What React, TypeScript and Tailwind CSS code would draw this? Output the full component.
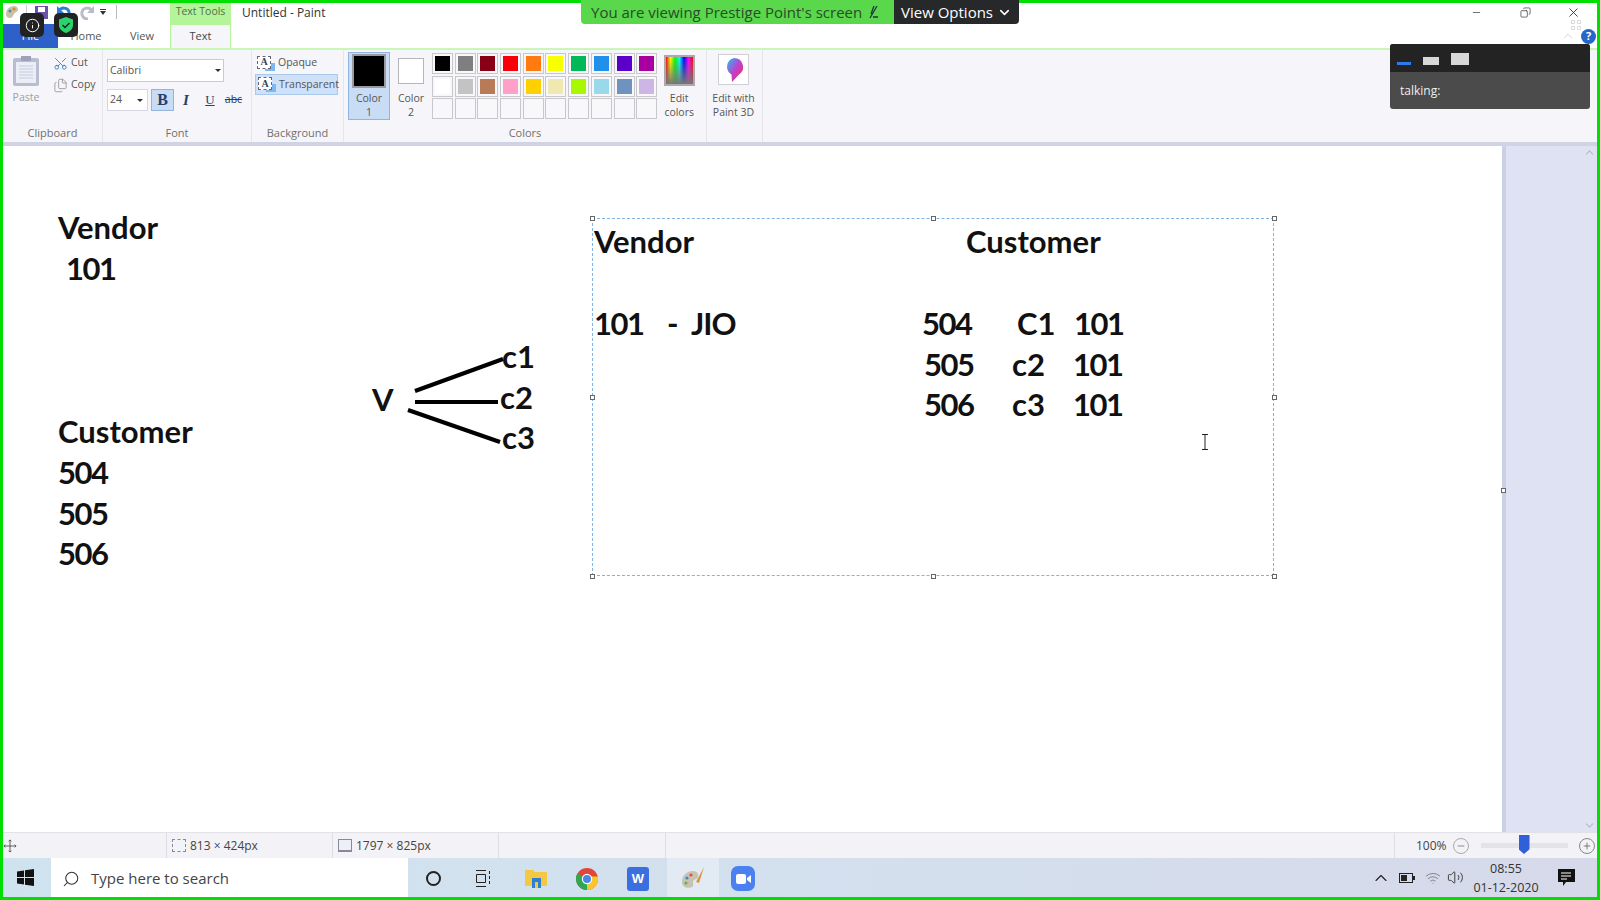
import { Scissors, Files, Search, ChevronDown, ChevronUp, Minus, Plus, X, Copy, Info, Wifi, Volume2 } from "lucide-react";
import type { ReactNode } from "react";

const row1 = ["#000000", "#7f7f7f", "#880015", "#f80008", "#ff7a10", "#f8ff00", "#00b858", "#2090e8", "#5a00c8", "#a800a0"];
const row2 = ["#ffffff", "#c3c3c3", "#b97a57", "#ffa0c8", "#ffd000", "#efe8b0", "#a8f800", "#99d9ea", "#7092be", "#cdb6e6"];

function Swatch({ color }: { color?: string }) {
  return (
    <div className="h-[21px] w-[21px] border border-[#c8c8cc] bg-[#f8f7fa] p-[2px]">
      {color && <div className="h-full w-full" style={{ background: color }} />}
    </div>
  );
}

function Group({ label, className, children }: { label: string; className: string; children: ReactNode }) {
  return (
    <div className={`flex shrink-0 flex-col border-r border-[#e6e5ea] ${className}`}>
      <div className="flex flex-1">{children}</div>
      <div className="pb-[2px] text-center text-[11px] leading-[14px] text-[#707070]">{label}</div>
    </div>
  );
}

function Ink({ className, children }: { className: string; children: ReactNode }) {
  return (
    <span className={`absolute -translate-y-px whitespace-pre font-['Lato',sans-serif] text-[31px] font-bold leading-[40px] text-[#111] ${className}`}>
      {children}
    </span>
  );
}

function Handle({ className }: { className: string }) {
  return <div className={`absolute h-[5px] w-[5px] border border-[#666] bg-white ${className}`} />;
}

function TextIcon() {
  return (
    <div className="relative h-[15px] w-[18px] shrink-0">
      <div className="absolute bottom-0 right-0 h-[8px] w-[10px] bg-[#7db8f0]" />
      <div className="absolute left-0 top-0 flex h-[13px] w-[14px] items-center justify-center border border-dashed border-[#667] bg-white font-['Liberation_Serif',serif] text-[10px] font-bold leading-none text-[#345]">
        A
      </div>
    </div>
  );
}

export default function App() {
  return (
    <div className="flex h-screen w-screen flex-col overflow-hidden bg-[#00e000] p-[3px] font-['Open_Sans',sans-serif] text-[#555]">
      <div className="relative flex min-h-0 flex-1 flex-col bg-white">
        {/* title bar */}
        <div className="flex h-[21px] shrink-0 items-center">
          <div className="flex w-[167px] items-center gap-[7px] pb-[3px] pl-[2px]">
            <svg width="14" height="16" viewBox="0 0 14 16"><path d="M1 10c0-5 4-8 8-8 3 0 4 2 4 4s-3 2-4 4-2 4-4 4-4-1-4-4z" fill="#c9c2a0" /><circle cx="5" cy="7" r="1.5" fill="#3a8ad0" /><circle cx="9" cy="5" r="1.5" fill="#e08030" /></svg>
            <div className="h-[14px] w-px bg-[#ccc]" />
            <svg width="15" height="15" viewBox="0 0 15 15"><rect x="1" y="1" width="13" height="13" fill="#6a52a8" /><rect x="4" y="2" width="7" height="5" fill="#fff" /></svg>
            <svg width="16" height="15" viewBox="0 0 16 15" fill="none"><path d="M3 6c2-4 9-4 10 1s-3 7-6 7" stroke="#2f7fd0" strokeWidth="3" /><path d="M1 1v7h7z" fill="#2f7fd0" /></svg>
            <svg width="16" height="15" viewBox="0 0 16 15" fill="none"><path d="M13 6c-2-4-9-4-10 1s3 7 6 7" stroke="#b8bcc8" strokeWidth="3" /><path d="M15 1v7H8z" fill="#b8bcc8" /></svg>
            <div className="flex w-[10px] -translate-x-[6px] flex-col items-center gap-[1px] pl-[3px]">
              <div className="h-px w-[6px] bg-[#333]" />
              <div className="h-0 w-0 border-x-[3px] border-t-[4px] border-x-transparent border-t-[#333]" />
            </div>
            <div className="h-[14px] w-px -translate-x-[3px] bg-[#bbb]" />
          </div>
          <div className="flex h-full w-[61px] items-center justify-center bg-[#b4f59a] pb-[3px] text-[10.5px] text-[#4f6f4a]">Text Tools</div>
          <div className="pb-[2px] pl-[11px] text-[12px] text-[#333]">Untitled - Paint</div>
          <div className="ml-auto flex w-[144px] items-center pb-[3px]">
            <Minus size={11} className="ml-[18px] text-[#222]" strokeWidth={1.4} />
            <Copy size={11} className="ml-[38px] -scale-x-100 text-[#222]" strokeWidth={1.4} />
            <X size={15} className="ml-[35px] text-[#222]" strokeWidth={1.3} />
          </div>
        </div>
        <div className="flex h-[24px] shrink-0 items-stretch">
          <div className="flex w-[55px] items-center justify-center bg-[#2f5fc8] text-[11px] text-white">File</div>
          <div className="flex w-[56px] items-center justify-center text-[11px] text-[#555]">Home</div>
          <div className="flex w-[56px] items-center justify-center text-[11px] text-[#555]">View</div>
          <div className="-mb-[2px] flex w-[61px] items-center justify-center border-x border-t border-[#b4f59a] bg-[#f6f5f9] pb-[2px] text-[11px] text-[#444]">Text</div>
          <div className="ml-auto flex items-center gap-[6px] pr-[1px]">
            <ChevronUp size={14} className="text-[#c0c0c0]" strokeWidth={1.2} />
            <div className="flex h-[15px] w-[15px] items-center justify-center rounded-full bg-[#2566c8] text-[11px] font-bold text-white">?</div>
          </div>
        </div>

        {/* ribbon */}
        <div className="flex h-[94px] shrink-0 border-t-2 border-[#c8f7b8] bg-[#f6f5f9]">
          <Group label="Clipboard" className="w-[100px]">
            <div className="flex w-[46px] flex-col items-center pt-[5px]">
              <svg width="28" height="32" viewBox="0 0 28 32">
                <rect x="1" y="3" width="26" height="28" rx="2" fill="#b9bdd2" />
                <rect x="4" y="7" width="20" height="21" fill="#eceef6" />
                <path d="M7 11h14M7 14h14M7 17h14M7 20h14M7 23h14" stroke="#c5cae0" />
                <rect x="9" y="1" width="10" height="5" fill="#9da2b8" />
              </svg>
              <span className="mt-[3px] text-[10.5px] leading-[14px] text-[#a0a0a0]">Paste</span>
            </div>
            <div className="flex flex-col gap-[6px] pl-[4px] pt-[5px]">
              <div className="flex h-[16px] items-center gap-[3px] text-[10.5px]">
                <Scissors size={15} className="-rotate-90 text-[#2f80c8]" strokeWidth={1.4} />
                Cut
              </div>
              <div className="flex h-[16px] items-center gap-[3px] text-[10.5px]">
                <Files size={15} className="text-[#888]" strokeWidth={1.2} />
                Copy
              </div>
            </div>
          </Group>
          <Group label="Font" className="w-[149px]">
            <div className="flex flex-col gap-[7px] pl-[4px] pt-[9px]">
              <div className="flex h-[23px] w-[117px] items-center justify-between border border-[#c5cbdc] bg-white px-[2px] text-[10.5px]">
                Calibri
                <div className="h-0 w-0 border-x-[3px] border-t-[3px] border-x-transparent border-t-[#333]" />
              </div>
              <div className="flex items-center">
                <div className="flex h-[22px] w-[41px] items-center justify-between border border-[#d5d8e4] bg-white px-[2px] text-[10.5px]">
                  24
                  <div className="mr-[2px] h-0 w-0 border-x-[3px] border-t-[3px] border-x-transparent border-t-[#333]" />
                </div>
                <div className="ml-[3px] flex h-[22px] w-[23px] items-center justify-center border border-[#94b4dc] bg-[#c9dcf5] font-['Liberation_Serif',serif] text-[16px] font-bold text-[#2a3f68]">B</div>
                <div className="flex h-[22px] w-[24px] items-center justify-center font-['Liberation_Serif',serif] text-[15px] font-bold italic text-[#2a3f68]">I</div>
                <div className="flex h-[22px] w-[24px] items-center justify-center font-['Liberation_Serif',serif] text-[13px] text-[#2a3f68] underline">U</div>
                <div className="flex h-[22px] w-[23px] items-center justify-center text-[10.5px] text-[#2a3f68] line-through">abc</div>
              </div>
            </div>
          </Group>
          <Group label="Background" className="w-[92px]">
            <div className="flex flex-col gap-[1px] pl-[3px] pt-[3px]">
              <div className="flex h-[20px] w-[83px] items-center gap-[3px] pl-[2px] text-[10.5px]">
                <TextIcon />
                Opaque
              </div>
              <div className="flex h-[21px] w-[83px] items-center gap-[3px] border border-[#a8c8ec] bg-[#cfe1f8] pl-[2px] text-[10.5px]">
                <TextIcon />
                Transparent
              </div>
            </div>
          </Group>
          <Group label="Colors" className="w-[363px]">
            <div className="flex pl-[4px] pt-[2px]">
              <div className="flex h-[68px] w-[42px] flex-col items-center border border-[#90b4e0] bg-[#c9dcf5] pt-[1px]">
                <div className="h-[34px] w-[34px] border-2 border-[#9a9aa0] bg-black" />
                <span className="mt-[3px] text-center text-[10.5px] leading-[14px]">
                  Color
                  <br />1
                </span>
              </div>
              <div className="flex h-[68px] w-[42px] flex-col items-center pt-[6px]">
                <div className="h-[26px] w-[26px] border border-[#b5b5ba] bg-white" />
                <span className="mt-[7px] text-center text-[10.5px] leading-[14px]">
                  Color
                  <br />2
                </span>
              </div>
              <div className="mt-[1px] grid h-fit grid-cols-[repeat(10,21px)] gap-x-[1.7px] gap-y-[1.5px]">
                {row1.map((c) => <Swatch key={c} color={c} />)}
                {row2.map((c) => <Swatch key={c} color={c} />)}
                {row1.map((c) => <Swatch key={`e${c}`} />)}
              </div>
              <div className="ml-[2px] flex w-[40px] flex-col items-center pt-[3px]">
                <div className="h-[31px] w-[31px] border-2 border-[#b0a8a8] bg-[linear-gradient(to_bottom,transparent,#777),linear-gradient(to_right,#f00,#ff0,#0f0,#0ff,#00f,#f0f,#f00)]" />
                <span className="mt-[5px] text-center text-[10.5px] leading-[14px]">
                  Edit
                  <br />
                  colors
                </span>
              </div>
            </div>
          </Group>
          <Group label="" className="w-[56px]">
            <div className="flex w-full flex-col items-center pr-[2px] pt-[4px]">
              <div className="flex h-[31px] w-[31px] items-center justify-center border border-[#d0d0d4] bg-white">
                <svg width="20" height="26" viewBox="0 0 20 26">
                  <defs>
                    <linearGradient id="p3d" x1="0" y1="0" x2="1" y2="1">
                      <stop offset="0" stopColor="#20c0f0" />
                      <stop offset="0.5" stopColor="#c040d0" />
                      <stop offset="1" stopColor="#f03040" />
                    </linearGradient>
                  </defs>
                  <path d="M10 1a9 9 0 0 1 5 16.5L8 25l-.5-7.5A9 9 0 0 1 10 1z" fill="url(#p3d)" />
                </svg>
              </div>
              <span className="mt-[6px] text-center text-[10.5px] leading-[14px]">
                Edit with
                <br />
                Paint 3D
              </span>
            </div>
          </Group>
        </div>
        <div className="h-[4px] shrink-0 bg-[#d0d3e4]" />

        {/* canvas */}
        <div className="flex min-h-0 flex-1">
          <div className="relative w-[1499px] shrink-0 overflow-hidden bg-white">
            <Ink className="left-[55px] top-[62px]">Vendor</Ink>
            <Ink className="left-[63px] top-[103px] tracking-[-1.5px]">101</Ink>
            <Ink className="left-[55px] top-[266px]">Customer</Ink>
            <Ink className="left-[55px] top-[307px] tracking-[-1.5px]">504</Ink>
            <Ink className="left-[55px] top-[348px] tracking-[-1.5px]">505</Ink>
            <Ink className="left-[55px] top-[388px] tracking-[-1.5px]">506</Ink>
            <Ink className="left-[369px] top-[234px]">V</Ink>
            <Ink className="left-[499px] top-[191px]">c1</Ink>
            <Ink className="left-[497px] top-[232px]">c2</Ink>
            <Ink className="left-[499px] top-[272px]">c3</Ink>
            <svg className="absolute left-0 top-0" width="700" height="400" fill="none" stroke="#000" strokeWidth="4">
              <path d="M412 245l88-32M412 256h83M405 264l92 32" />
            </svg>

            <div className="absolute left-[589px] top-[72px] h-[358px] w-[682px] border border-dashed border-[#7fb4e4]" />
            <Handle className="left-[587px] top-[70px]" />
            <Handle className="left-[928px] top-[70px]" />
            <Handle className="left-[1269px] top-[70px]" />
            <Handle className="left-[587px] top-[249px]" />
            <Handle className="left-[1269px] top-[249px]" />
            <Handle className="left-[587px] top-[428px]" />
            <Handle className="left-[928px] top-[428px]" />
            <Handle className="left-[1269px] top-[428px]" />

            <Ink className="left-[591px] top-[76px]">Vendor</Ink>
            <Ink className="left-[963px] top-[76px]">Customer</Ink>
            <Ink className="left-[591px] top-[158px] tracking-[-1.5px]">101</Ink>
            <Ink className="left-[664px] top-[158px]">-</Ink>
            <Ink className="left-[688px] top-[158px] tracking-[-1px]">JIO</Ink>
            <Ink className="left-[919px] top-[158px] tracking-[-1.5px]">504</Ink>
            <Ink className="left-[1014px] top-[158px]">C1</Ink>
            <Ink className="left-[1071px] top-[158px] tracking-[-1.5px]">101</Ink>
            <Ink className="left-[921px] top-[199px] tracking-[-1.5px]">505</Ink>
            <Ink className="left-[1009px] top-[199px]">c2</Ink>
            <Ink className="left-[1070px] top-[199px] tracking-[-1.5px]">101</Ink>
            <Ink className="left-[921px] top-[239px] tracking-[-1.5px]">506</Ink>
            <Ink className="left-[1009px] top-[239px]">c3</Ink>
            <Ink className="left-[1070px] top-[239px] tracking-[-1.5px]">101</Ink>

            <svg className="absolute left-[1198px] top-[288px]" width="8" height="16" fill="none" stroke="#222">
              <path d="M1 .5h6M4 .5v15M1 15.5h6" />
            </svg>
          </div>
          <div className="relative flex flex-1 justify-end border-l-4 border-[#ccd0e4] bg-[#dfe2f3]">
            <div className="absolute -left-[5px] top-[342px] h-[5px] w-[5px] border border-[#666] bg-white" />
            <div className="flex w-[15px] flex-col items-center justify-between">
              <ChevronUp size={13} className="text-[#bbb]" />
              <ChevronDown size={13} className="text-[#bbb]" />
            </div>
          </div>
        </div>

        {/* status bar */}
        <div className="flex h-[26px] shrink-0 items-center border-t border-[#e2e2e6] bg-[#f3f2f6] text-[12px] text-[#444]">
          <div className="flex h-full w-[164px] items-center border-r border-[#dedee2]">
            <svg width="14" height="14" viewBox="0 0 15 15" fill="none" stroke="#555"><path d="M7.5 1v13M1 7.5h13M6 2.5l1.5-1.5L9 2.5M6 12.5L7.5 14 9 12.5M2.5 6L1 7.5 2.5 9M12.5 6L14 7.5 12.5 9" /></svg>
          </div>
          <div className="flex h-full w-[166px] items-center gap-[4px] border-r border-[#dedee2] pl-[5px]">
            <div className="h-[13px] w-[14px] border border-dashed border-[#889] bg-[#f3f4fa]" />
            813 × 424px
          </div>
          <div className="flex h-full w-[166px] items-center gap-[4px] border-r border-[#dedee2] pl-[5px]">
            <div className="h-[13px] w-[14px] border border-b-2 border-[#889] bg-[#eef0f8]" />
            1797 × 825px
          </div>
          <div className="h-full w-[167px] border-r border-[#dedee2]" />
          <div className="ml-auto flex h-full w-[645px] items-center">
            <div className="ml-auto flex h-full w-[203px] items-center border-l border-[#dedee2] pl-[21px]">
              <span>100%</span>
              <div className="ml-[6px] flex h-[16px] w-[16px] items-center justify-center rounded-full border border-[#aaa]">
                <Minus size={10} className="text-[#777]" />
              </div>
              <div className="relative ml-[12px] h-[5px] w-[87px] bg-[#e4e4e8]">
                <div className="absolute -top-[8px] left-[38px] h-[19px] w-[11px] bg-[#3060d8] [clip-path:polygon(0_0,100%_0,100%_75%,50%_100%,0_75%)]" />
              </div>
              <div className="ml-[11px] flex h-[16px] w-[16px] items-center justify-center rounded-full border border-[#888]">
                <Plus size={10} className="text-[#666]" />
              </div>
            </div>
          </div>
        </div>

        {/* taskbar */}
        <div className="flex h-[39px] shrink-0 items-center bg-[linear-gradient(to_right,#cfe3ef,#d3e0ee_50%,#d6d9ea)]">
          <div className="flex w-[48px] justify-center pr-[4px]">
            <svg width="17" height="17" viewBox="0 0 17 17" fill="#111"><path d="M0 2.5l7-1v6.5H0zM8 1.3l9-1.300v8H8zM0 9h7v6.5l-7-1zM8 9h9v8l-9-1.300z" /></svg>
          </div>
          <div className="flex h-full w-[357px] items-center bg-white pl-[11px] pt-[2px] text-[15px] text-[#444]">
            <Search size={18} strokeWidth={1.4} className="-scale-x-100 text-[#333]" />
            <span className="ml-[11px]">Type here to search</span>
          </div>
          <div className="flex w-[50px] justify-center pt-[2px]">
            <div className="h-[15px] w-[15px] rounded-full border-[2.5px] border-[#222]" />
          </div>
          <div className="flex w-[48px] justify-center pt-[2px]">
            <svg width="17" height="17" viewBox="0 0 17 17" fill="none" stroke="#222"><path d="M2 .5h10M2 16.5h10M2.5 4.5h9v8h-9zM15.5 1v3M15.5 6v3M15.5 11v3" /></svg>
          </div>
          <div className="flex w-[59px] justify-center pt-[2px]">
            <svg width="22" height="19" viewBox="0 0 22 19"><path d="M0 1h8l2 2h12v14H0z" fill="#f4c842" /><rect x="7" y="9" width="9" height="10" fill="#2f7fd0" /><rect x="10" y="13" width="3" height="6" fill="#f4c842" /></svg>
          </div>
          <div className="flex w-[44px] justify-center pt-[2px]">
            <svg width="22" height="22" viewBox="0 0 22 22">
              <circle cx="11" cy="11" r="11" fill="#e0463a" />
              <path d="M11 11L1.5 16.5A11 11 0 0 0 11 22z" fill="#2fa84f" />
              <path d="M11 22A11 11 0 0 0 21.8 8.5H11z" fill="#f9c62c" />
              <path d="M11 11L1.5 16.5A11 11 0 0 1 1.5 5.5z" fill="#2fa84f" />
              <circle cx="11" cy="11" r="5.2" fill="#fff" />
              <circle cx="11" cy="11" r="4" fill="#4a86e8" />
            </svg>
          </div>
          <div className="flex w-[58px] justify-center pt-[2px]">
            <div className="flex h-[24px] w-[22px] items-center justify-center rounded-[3px] bg-[#3b6fe0] font-['Liberation_Sans',sans-serif] text-[13px] font-bold text-white">W</div>
          </div>
          <div className="flex h-full w-[52px] items-center justify-center bg-[#e2ebf3] pt-[2px]">
            <svg width="26" height="26" viewBox="0 0 26 26">
              <path d="M2 16c0-7 5-11 11-11 4 0 6 3 5 6s-5 2-5 5 1 4-1 5-10 2-10-5z" fill="#c8c2b0" />
              <circle cx="7" cy="12" r="1.6" fill="#3a8ad0" />
              <circle cx="11" cy="9" r="1.6" fill="#e05050" />
              <circle cx="6" cy="17" r="1.6" fill="#60b060" />
              <path d="M24 1l-8 15 3 1z" fill="#d8953a" />
            </svg>
          </div>
          <div className="flex w-[48px] justify-center pt-[2px]">
            <div className="flex h-[25px] w-[24px] items-center justify-center rounded-[7px] bg-[#4a80f0]">
              <svg width="15" height="10" viewBox="0 0 15 10" fill="#fff"><rect width="10" height="10" rx="2" /><path d="M11 4l4-3v8l-4-3z" /></svg>
            </div>
          </div>
          <div className="ml-auto flex h-full items-center">
            <ChevronUp size={20} strokeWidth={1.3} className="text-[#222]" />
            <svg className="ml-[8px]" width="16" height="10" viewBox="0 0 16 10"><rect x=".5" y=".5" width="13" height="9" fill="none" stroke="#222" /><rect x="2" y="2" width="6" height="6" fill="#222" /><rect x="14" y="3" width="2" height="4" fill="#222" /></svg>
            <Wifi size={16} strokeWidth={1.3} className="ml-[10px] text-[#777]" />
            <Volume2 size={17} strokeWidth={1.3} className="ml-[6px] text-[#333]" />
            <div className="ml-[6px] w-[72px] text-center text-[12.5px] leading-[19px] text-[#333]">
              08:55
              <br />
              01-12-2020
            </div>
            <svg className="ml-[16px] mr-[22px]" width="17" height="17" viewBox="0 0 17 17"><path d="M0 0h17v13H8l-3 4v-4H0z" fill="#111" /><path d="M3 4h10M3 7h10M3 10h6" stroke="#fff" /></svg>
          </div>
        </div>

        {/* share bar */}
        <div className="absolute left-[578px] top-[-3px] flex h-[24px] overflow-hidden rounded-b-[4px] text-[15px] leading-[24px]">
          <div className="flex w-[313px] items-center gap-[6px] bg-[#58d84a] pl-[10px] text-[#2c4a2c]">
            You are viewing Prestige Point's screen
            <svg width="11" height="14" viewBox="0 0 11 14" fill="none" stroke="#234"><path d="M6 1L3 9M9 1L2 13M5 12h5" strokeWidth="1.3" /></svg>
          </div>
          <div className="flex w-[125px] items-center gap-[4px] bg-[#26282a] pl-[7px] text-white">
            View Options
            <ChevronDown size={15} strokeWidth={2.5} />
          </div>
        </div>

        {/* meeting badges */}
        <div className="absolute left-[17px] top-[10px] flex h-[24px] w-[24px] items-center justify-center rounded-[5px] bg-[#222]">
          <Info size={15} className="text-white" strokeWidth={1.6} />
        </div>
        <div className="absolute left-[51px] top-[10px] flex h-[24px] w-[24px] items-center justify-center rounded-[5px] bg-[#222]">
          <svg width="14" height="16" viewBox="0 0 14 16"><path d="M7 0l7 2.5V8c0 4-3 6.5-7 8-4-1.5-7-4-7-8V2.5z" fill="#2bd46a" /><path d="M3.5 8l2.5 2.5 4.500-4.500" fill="none" stroke="#123" strokeWidth="1.5" /></svg>
        </div>

        {/* faint grip under the close button */}
        <div className="absolute left-[1568px] top-[17px] grid grid-cols-2 gap-[2px]">
          <div className="h-[4px] w-[4px] border border-[#ddd]" />
          <div className="h-[4px] w-[4px] border border-[#ddd]" />
          <div className="h-[4px] w-[4px] border border-[#ddd]" />
          <div className="h-[4px] w-[4px] border border-[#ddd]" />
        </div>

        {/* talking panel */}
        <div className="absolute left-[1387px] top-[41px] h-[65px] w-[200px] overflow-hidden rounded-[3px] bg-[#4b4b4b]">
          <div className="flex h-[28px] items-end gap-[12px] bg-[#232323] pb-[7px] pl-[7px]">
            <div className="h-[3px] w-[14px] bg-[#2f78f0]" />
            <div className="h-[8px] w-[16px] bg-[#d8d8d8]" />
            <div className="h-[12px] w-[18px] bg-[#d8d8d8]" />
          </div>
          <div className="pl-[10px] pt-[10px] text-[12px] leading-[18px] text-[#eee]">talking:</div>
        </div>
      </div>
    </div>
  );
}
